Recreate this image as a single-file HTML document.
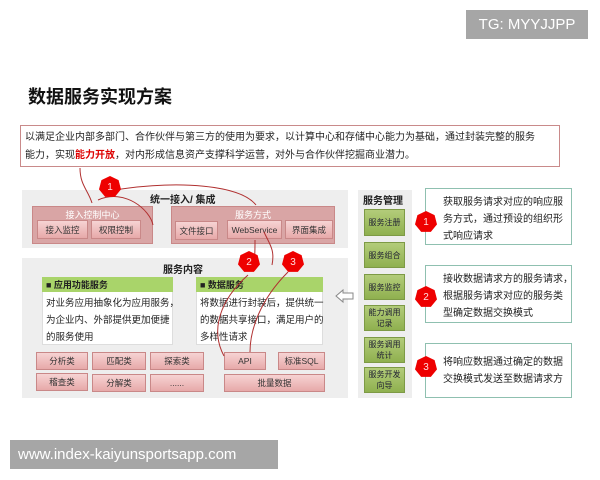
<!DOCTYPE html>
<html><head><meta charset="utf-8"><style>
*{margin:0;padding:0;box-sizing:border-box}
body{width:600px;height:480px;background:#fff;position:relative;overflow:hidden;font-family:"Liberation Sans","Noto Sans CJK SC",sans-serif;color:#222}
.a{position:absolute}
.c{display:flex;align-items:center;justify-content:center;text-align:center}
.pb{background:linear-gradient(#f6d3d3,#e7a9a9);border:1px solid #c98888;font-size:8.5px;color:#333}
.gb{background:linear-gradient(#b3cc7a,#8fb04f);border:1px solid #7d9a45;font-size:8px;color:#223;line-height:11px}
.rb{border:1px solid #8fc0b0;background:#fff;font-size:10px;line-height:17px;padding:5px 0 0 17px;color:#222;white-space:nowrap}
.hx{width:22px;height:22px;background:#e00;clip-path:polygon(50% 0,89% 19%,100% 61%,72% 95%,28% 95%,0 61%,11% 19%);color:#fdd;font-size:10px}
.bt{font-size:9.5px;line-height:17px;white-space:nowrap}
</style></head><body>
<div class="a c" style="left:466px;top:10px;width:122px;height:29px;background:#a6a6a6;color:#fff;font-size:15px">TG: MYYJJPP</div>
<div class="a" style="left:28px;top:83px;font-size:18px;font-weight:bold;color:#111">数据服务实现方案</div>
<div class="a" style="left:20px;top:125px;width:540px;height:42px;border:1px solid #c98a8a;font-size:10px;line-height:18px;padding:3px 0 0 4px;white-space:nowrap">以满足企业内部多部门、合作伙伴与第三方的使用为要求，以计算中心和存储中心能力为基础，通过封装完整的服务<br>能力，实现<b style="color:#d00">能力开放</b>，对内形成信息资产支撑科学运营，对外与合作伙伴挖掘商业潜力。</div>

<div class="a" style="left:22px;top:190px;width:326px;height:58px;background:#eeeeee"></div>
<div class="a" style="left:150px;top:191px;font-size:10px;font-weight:bold">统一接入/ 集成</div>
<div class="a pb" style="left:32px;top:206px;width:121px;height:38px;background:#d9a5a5;color:#fff;font-size:9px;text-align:center;padding-top:1px">接入控制中心</div>
<div class="a pb c" style="left:37px;top:220px;width:51px;height:19px">接入监控</div>
<div class="a pb c" style="left:91px;top:220px;width:50px;height:19px">权限控制</div>
<div class="a pb" style="left:171px;top:206px;width:164px;height:38px;background:#d9a5a5;color:#fff;font-size:9px;text-align:center;padding-top:1px">服务方式</div>
<div class="a pb c" style="left:175px;top:221px;width:43px;height:19px">文件接口</div>
<div class="a pb c" style="left:227px;top:220px;width:55px;height:19px">WebService</div>
<div class="a pb c" style="left:285px;top:220px;width:48px;height:19px">界面集成</div>

<div class="a" style="left:22px;top:258px;width:326px;height:140px;background:#eeeeee"></div>
<div class="a" style="left:163px;top:261px;font-size:10px;font-weight:bold">服务内容</div>
<div class="a" style="left:42px;top:277px;width:131px;height:68px;background:#fff;border:1px solid #ddd"></div>
<div class="a" style="left:42px;top:277px;width:131px;height:15px;background:#a9d46a;font-size:9px;font-weight:bold;padding:1px 0 0 4px">■ 应用功能服务</div>
<div class="a bt" style="left:46px;top:295px">对业务应用抽象化为应用服务，<br>为企业内、外部提供更加便捷<br>的服务使用</div>
<div class="a" style="left:196px;top:277px;width:127px;height:68px;background:#fff;border:1px solid #ddd"></div>
<div class="a" style="left:196px;top:277px;width:127px;height:15px;background:#a9d46a;font-size:9px;font-weight:bold;padding:1px 0 0 4px">■ 数据服务</div>
<div class="a bt" style="left:200px;top:295px">将数据进行封装后，提供统一<br>的数据共享接口，满足用户的<br>多样性请求</div>
<div class="a pb c" style="left:36px;top:352px;width:52px;height:18px">分析类</div>
<div class="a pb c" style="left:92px;top:352px;width:54px;height:18px">匹配类</div>
<div class="a pb c" style="left:150px;top:352px;width:54px;height:18px">探索类</div>
<div class="a pb c" style="left:36px;top:373px;width:52px;height:18px">稽查类</div>
<div class="a pb c" style="left:92px;top:374px;width:54px;height:18px">分解类</div>
<div class="a pb c" style="left:150px;top:374px;width:54px;height:18px">......</div>
<div class="a pb c" style="left:224px;top:352px;width:42px;height:18px">API</div>
<div class="a pb c" style="left:278px;top:352px;width:47px;height:18px">标准SQL</div>
<div class="a pb c" style="left:224px;top:374px;width:101px;height:18px">批量数据</div>

<svg class="a" style="left:0;top:0" width="600" height="480">
<g fill="none" stroke="#b03030" stroke-width="1">
<path d="M80 168 C80 185 88 190 92 203"/>
<path d="M115 190 C180 180 240 185 256 205"/>
<path d="M153 225 C150 210 125 188 98 200"/>
<path d="M255 240 C255 260 255 270 248 270"/>
<path d="M248 275 C220 300 210 330 224 356"/>
<path d="M272 265 C275 250 270 245 264 232"/>
<path d="M288 272 C260 300 250 330 250 352"/>
</g>
<path d="M336 296 l7 -6 v3 h10 v6 h-10 v3 z" fill="#fff" stroke="#888"/>
</svg>
<div class="a hx c" style="left:99px;top:176px">1</div>
<div class="a hx c" style="left:238px;top:251px">2</div>
<div class="a hx c" style="left:282px;top:251px">3</div>

<div class="a" style="left:358px;top:190px;width:54px;height:208px;background:#eeeeee"></div>
<div class="a" style="left:363px;top:192px;font-size:10px;font-weight:bold">服务管理</div>
<div class="a gb c" style="left:364px;top:209px;width:41px;height:27px">服务注册</div>
<div class="a gb c" style="left:364px;top:242px;width:41px;height:26px">服务组合</div>
<div class="a gb c" style="left:364px;top:274px;width:41px;height:26px">服务监控</div>
<div class="a gb c" style="left:364px;top:305px;width:41px;height:26px">能力调用<br>记录</div>
<div class="a gb c" style="left:364px;top:337px;width:41px;height:26px">服务调用<br>统计</div>
<div class="a gb c" style="left:364px;top:367px;width:41px;height:26px">服务开发<br>向导</div>

<div class="a rb" style="left:425px;top:188px;width:147px;height:57px">获取服务请求对应的响应服<br>务方式，通过预设的组织形<br>式响应请求</div>
<div class="a rb" style="left:425px;top:265px;width:147px;height:58px">接收数据请求方的服务请求，<br>根据服务请求对应的服务类<br>型确定数据交换模式</div>
<div class="a rb" style="left:425px;top:343px;width:147px;height:55px;padding-top:10px">将响应数据通过确定的数据<br>交换模式发送至数据请求方</div>
<div class="a hx c" style="left:415px;top:211px">1</div>
<div class="a hx c" style="left:415px;top:286px">2</div>
<div class="a hx c" style="left:415px;top:356px">3</div>

<div class="a" style="left:10px;top:440px;width:268px;height:29px;background:#a6a6a6;color:#fff;font-size:15px;padding:6px 0 0 8px">www.index-kaiyunsportsapp.com</div>
</body></html>
